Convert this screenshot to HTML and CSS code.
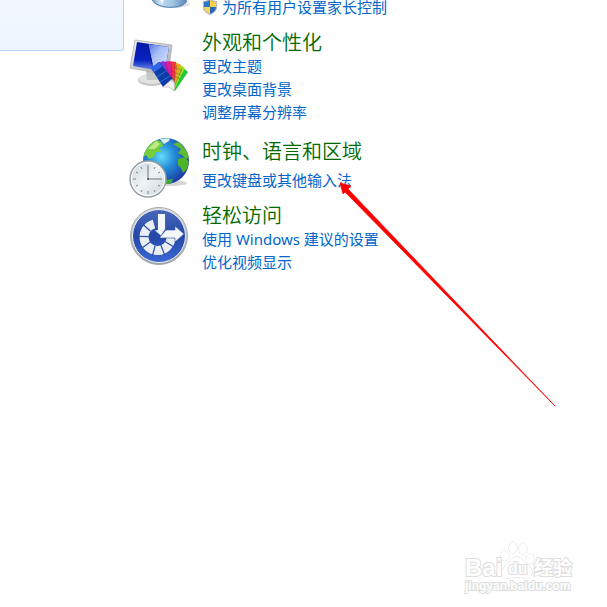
FILE: index.html
```
<!DOCTYPE html>
<html lang="zh-CN">
<head>
<meta charset="utf-8">
<title>控制面板</title>
<link rel="stylesheet" href="styles.css">
</head>
<body>
<div class="page">
  <aside class="side"></aside>
  <main class="list">
    <section class="group group-accounts">
      <svg class="icon icon-cut" viewBox="0 0 62 12" aria-hidden="true">
        <defs><linearGradient id="body" x1="0" x2="1"><stop offset="0" stop-color="#6f9cc4"/><stop offset=".2" stop-color="#c7dcf0"/><stop offset=".6" stop-color="#a3c4e4"/><stop offset="1" stop-color="#5486b3"/></linearGradient></defs>
        <ellipse cx="45" cy="4" rx="17" ry="4" fill="#e2e2e2"/>
        <path d="M24 0H59C58 5 53 8 42 8 32 8 26 5 24 0Z" fill="url(#body)"/>
        <path d="M24 0C30 9 52 10 59 1" fill="none" stroke="#5485b0"/>
        <path d="M32 0L34 5 36 0Z" fill="#f4f8fc"/>
      </svg>
      <div class="body">
        <a class="link shielded" href="#"><svg class="shield" viewBox="0 0 16 16" aria-hidden="true"><path d="M8 0C10 1 13 2 15 2V8C15 12 12 14 8 16 4 14 1 12 1 8V2C3 2 6 1 8 0Z" fill="#aeb6bd"/><path d="M8 1V8H2V3C4 3 6 2 8 1Z" fill="#2f78c8"/><path d="M8 1C10 2 12 3 14 3V8H8Z" fill="#f7cf43"/><path d="M2 8H8V15C4 13 2 11 2 8Z" fill="#f5d75c"/><path d="M8 8H14C14 11 12 13 8 15Z" fill="#2867b4"/></svg>为所有用户设置家长控制</a>
      </div>
    </section>
    <section class="group group-look">
      <svg class="icon" viewBox="0 0 62 62" aria-hidden="true">
        <defs>
          <linearGradient id="screen" x1="0" y1="0" x2="0" y2="1"><stop offset="0" stop-color="#0718a8"/><stop offset=".6" stop-color="#0822c0"/><stop offset="1" stop-color="#7d9df0"/></linearGradient>
          <linearGradient id="shine" x1="0" y1="0" x2="1" y2="1"><stop offset="0" stop-color="#4f72e0"/><stop offset=".4" stop-color="#a9bff5"/><stop offset="1" stop-color="#dce8ff"/></linearGradient>
          <linearGradient id="metal" x1="0" y1="0" x2="1" y2="1"><stop offset="0" stop-color="#f4f4f4"/><stop offset="1" stop-color="#a6a6a6"/></linearGradient>
        </defs>
        <ellipse cx="24" cy="46" rx="14" ry="6" fill="#c4c4c4"/>
        <ellipse cx="24" cy="45" rx="13" ry="5" fill="#e2e2e2"/>
        <path d="M18 37L31 39 29 46H19Z" fill="#c6c6c6"/>
        <path d="M7 6L44 11 40 41 2 34Z" fill="url(#metal)" stroke="#a5a5a5" stroke-width=".7"/>
        <path d="M9 8L41 13 37 38 5 32Z" fill="url(#screen)"/>
        <path d="M20 10L41 13 37 37 26 35Z" fill="url(#shine)"/>
        <path d="M20 10L24 30" stroke="#071a9c"/>
        <path d="M44 54L54 33 60 38 47 57Z" fill="#22c83c"/>
        <path d="M44 54L51 30 57 34 46 56Z" fill="#a5dd20"/>
        <path d="M43 53L47 28 53 31 46 55Z" fill="#f0a71c"/>
        <path d="M42 52L41 27 48 28 46 54Z" fill="#ee3540"/>
        <path d="M40 52L35 28 42 27 45 53Z" fill="#df18a8"/>
        <path d="M38 52L29 29 36 27 44 52Z" fill="#7c36db"/>
        <path d="M23 34L31 28 45 45 35 53Z" fill="#0c3ca8"/>
        <path d="M23 34L31 28 34 32 26 38Z" fill="#2e65ea"/>
        <path d="M26 38L34 32M29 43L38 37M32 48L42 42" stroke="#397ae5" stroke-width=".8"/>
        <path d="M35 53L44 45 47 49 46 57 41 53Z" fill="#f2f2f2" stroke="#aaa" stroke-width=".6"/>
        <path d="M49 31L46 50M54 34L47 51M43 28L44 48M37 28L43 46M46 33L54 37M43 37L53 41M46 42L52 45" stroke="#333" stroke-width=".5" opacity=".6"/>
      </svg>
      <div class="body">
        <h2 class="title">外观和个性化</h2>
        <a class="link" href="#">更改主题</a>
        <a class="link" href="#">更改桌面背景</a>
        <a class="link" href="#">调整屏幕分辨率</a>
      </div>
    </section>
    <section class="group group-clock">
      <svg class="icon" viewBox="0 0 62 62" aria-hidden="true">
        <defs>
          <radialGradient id="sea" cx=".4" cy=".4" r=".62"><stop offset="0" stop-color="#65dcf6"/><stop offset=".45" stop-color="#238dd9"/><stop offset="1" stop-color="#1b3ca4"/></radialGradient>
          <linearGradient id="face" x1="0" y1="0" x2="1" y2="1"><stop offset="0" stop-color="#cbd5dc"/><stop offset=".5" stop-color="#eef3f5"/><stop offset="1" stop-color="#c9d3d9"/></linearGradient>
          <clipPath id="round"><circle cx="38" cy="24" r="23"/></clipPath>
        </defs>
        <ellipse cx="42" cy="46" rx="17" ry="3" fill="#d5d5d5"/>
        <circle cx="38" cy="24" r="23" fill="url(#sea)"/>
        <g clip-path="url(#round)">
          <path d="M14 21C17 12 21 5 29 3L34 5 35 9 31 11 33 15 28 15 26 20 21 22 18 18Z" fill="#77cf3b"/>
          <path d="M20 12L28 4 32 7 27 12Z" fill="#bce989"/>
          <path d="M32 2L42 1 41 4 36 7Z" fill="#d8eee9"/>
          <path d="M45 7L51 5 59 14 62 22 57 21 54 18 50 16 53 12Z" fill="#5dbb2e"/>
          <path d="M50 22L57 20 61 25 59 32 55 36 53 31 50 28Z" fill="#4eb52b"/>
          <path d="M35 43L45 42 42 49 36 49Z" fill="#39ad38"/>
        </g>
        <circle cx="20" cy="42" r="18" fill="url(#face)" stroke="#98a1a7" stroke-width="1.5"/>
        <circle cx="20" cy="42" r="16.6" fill="none" stroke="#fff"/>
        <path d="M20 28V42H34" fill="none" stroke="#6b7780" stroke-width="1"/>
        <g stroke="#7c8891"><path d="M20 54V57M5 42H8M13 30L14 32M8 35L10 36M27 30L26 32M32 35L30 36M32 49L30 48M27 55L26 53M13 55L14 53M8 49L10 48"/></g>
        <circle cx="20" cy="42" r="1" fill="#46535c"/>
      </svg>
      <div class="body">
        <h2 class="title">时钟、语言和区域</h2>
        <a class="link link-spaced" href="#">更改键盘或其他输入法</a>
      </div>
    </section>
    <section class="group group-access">
      <svg class="icon" viewBox="0 0 62 62" aria-hidden="true">
        <defs>
          <linearGradient id="disc" x1="0" y1="0" x2="0" y2="1"><stop offset="0" stop-color="#4869bc"/><stop offset=".5" stop-color="#2447a6"/><stop offset="1" stop-color="#3b68d7"/></linearGradient>
          <linearGradient id="rim" x1="0" y1="0" x2="0" y2="1"><stop offset="0" stop-color="#d9dcdf"/><stop offset="1" stop-color="#9ca2aa"/></linearGradient>
        </defs>
        <circle cx="31" cy="31" r="28.5" fill="url(#rim)" stroke="#a5a9ad"/>
        <circle cx="31" cy="31" r="26.5" fill="url(#disc)" stroke="#eef0f3"/>
        <path d="M26 19A13.500 13.500 0 1 0 43 33" fill="none" stroke="#e9edf4" stroke-width="9"/>
        <path d="M22.600 26.200L15 19.500M20.800 31.700L10.500 31.400M22.200 37L14 43M27.200 40.500L24.500 50.500M32.800 40L36.700 50M37 36.500L46 42" stroke="#2d50ad" stroke-width="1.200"/>
        <path d="M29.500 8.500H37.500V24L33 31 26 25H29.500Z" fill="#f5f6f9" stroke="#3153ad" stroke-width=".8"/>
        <path d="M32 32L38 25H47V21L56 29 47 37V33H32Z" fill="#f5f6f9" stroke="#3153ad" stroke-width=".6"/>
      </svg>
      <div class="body">
        <h2 class="title">轻松访问</h2>
        <a class="link" href="#">使用 Windows 建议的设置</a>
        <a class="link" href="#">优化视频显示</a>
      </div>
    </section>
  </main>
  <svg class="arrow" viewBox="0 0 216 226" aria-hidden="true"><path d="M0 1L11 4 8 7 215 224 5 10 3 12Z" fill="#f00" stroke="#f00" stroke-width=".7" stroke-linejoin="round"/></svg>
  <svg class="watermark" viewBox="0 0 112 56" aria-hidden="true">
    <g class="mark">
      <ellipse cx="42" cy="23" rx="4" ry="5"/><ellipse cx="50" cy="15" rx="4" ry="6"/><ellipse cx="60" cy="16" rx="4" ry="6"/><ellipse cx="67" cy="26" rx="4" ry="5"/>
      <path d="M54 24C59 24 61 29 66 33 72 39 69 46 62 45 56 44 52 44 46 45 39 46 36 39 42 33 46 29 49 24 54 24Z"/>
      <text x="2" y="43" class="logo">Bai</text>
      <text x="45" y="41" class="du">du</text>
      <text x="71" y="42" class="cjk">经验</text>
      <text x="2" y="57" class="url">jingyan.baidu.com</text>
    </g>
  </svg>
</div>
</body>
</html>
```
FILE: styles.css
```
* { box-sizing: border-box; }
body {
  margin: 0;
  background: #fff;
  font-family: "Noto Sans", "Noto Sans CJK SC", sans-serif;
}
.page {
  position: relative;
  display: flex;
  align-items: flex-start;
  min-height: 100vh;
  overflow: hidden;
}
.side {
  flex: 0 0 124px;
  height: 51px;
  border: 1px solid #b5d3fb;
  border-width: 0 1px 1px 0;
  border-bottom-right-radius: 3px;
  background: linear-gradient(#f3f8ff, #edf5ff);
}
.list { flex: 1; padding-left: 4px; }
.group { display: flex; align-items: flex-start; gap: 12px; }
.icon { flex: none; width: 62px; height: 62px; }
.icon-cut { height: 12px; }
.body { display: flex; flex-direction: column; align-items: flex-start; }
.title {
  margin: 0;
  font-family: "Noto Sans CJK SC", sans-serif;
  font-size: 20px;
  line-height: 26px;
  font-weight: 350;
  color: #006a00;
}
.link {
  font-size: 15px;
  line-height: 23px;
  font-weight: 400;
  color: #0066cc;
  text-decoration: none;
  white-space: nowrap;
}
.link-spaced { margin-top: 5px; }
.shielded {
  display: flex;
  align-items: center;
  gap: 4px;
  height: 14px;
  line-height: 14px;
}
.shield { width: 16px; height: 16px; }
.group-look { margin-top: 15px; }
.group-look .icon { margin-top: 5px; }
.group-clock { margin-top: 14px; }
.group-clock .icon { margin-top: -1px; }
.group-access { margin-top: 3px; }
.group-access .icon { margin-top: 3px; }
.arrow {
  position: absolute;
  left: 340px;
  top: 182px;
  width: 216px;
  height: 226px;
}
.watermark {
  position: absolute;
  right: 32px;
  bottom: 18px;
  width: 112px;
  height: 56px;
  overflow: visible;
}
.mark {
  fill: #fff;
  stroke: #dedede;
  stroke-width: 1px;
  paint-order: stroke;
  font-family: "Liberation Sans", sans-serif;
  font-weight: 700;
}
.mark text { stroke-width: 2px; }
.logo { font-size: 24px; }
.du { font-size: 16px; }
.cjk { font-size: 19px; font-family: "Noto Sans CJK SC", sans-serif; }
.url { font-size: 12px; }
```
